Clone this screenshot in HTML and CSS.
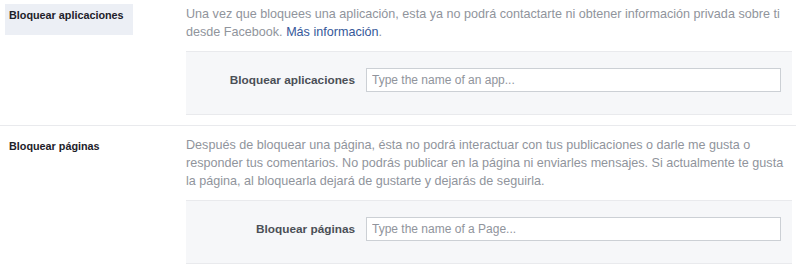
FILE: index.html
```html
<!DOCTYPE html>
<html lang="es">
<head>
<meta charset="utf-8">
<link rel="stylesheet" href="styles.css">
</head>
<body>
<div class="page">
  <div class="row row-first">
    <div class="side"><div class="side-label active">Bloquear aplicaciones</div></div>
    <div class="content">
      <p class="desc">Una vez que bloquees una aplicación, esta ya no podrá contactarte ni obtener información privada sobre ti desde Facebook. <a class="link" href="#">Más información</a>.</p>
      <div class="panel">
        <label class="panel-label">Bloquear aplicaciones</label>
        <input class="field" type="text" placeholder="Type the name of an app...">
      </div>
    </div>
  </div>
  <div class="row row-second">
    <div class="side"><div class="side-label">Bloquear páginas</div></div>
    <div class="content">
      <p class="desc">Después de bloquear una página, ésta no podrá interactuar con tus publicaciones o darle me gusta o responder tus comentarios. No podrás publicar en la página ni enviarles mensajes. Si actualmente te gusta la página, al bloquearla dejará de gustarte y dejarás de seguirla.</p>
      <div class="panel">
        <label class="panel-label">Bloquear páginas</label>
        <input class="field" type="text" placeholder="Type the name of a Page...">
      </div>
    </div>
  </div>
</div>
</body>
</html>
```

FILE: styles.css
```css
html, body {
  margin: 0;
  padding: 0;
  background: #ffffff;
}
body {
  font-family: "Liberation Sans", Arial, Helvetica, sans-serif;
  font-size: 12px;
  color: #1d2129;
}
.page {
  width: 796px;
}
.row {
  display: flex;
  border-bottom: 1px solid #e9eaed;
  padding-bottom: 10px;
}
.row-first {
  padding-top: 4px;
}
.row-second {
  padding-top: 9px;
  border-bottom: none;
  padding-bottom: 0;
}
.side {
  width: 181px;
  padding-left: 5px;
  flex: none;
}
.side-label {
  width: 120px;
  height: 25px;
  padding: 3px 4px;
  font-size: 10.8px;
  font-weight: bold;
  line-height: 16px;
  color: #1d2129;
}
.side-label.active {
  background: #eceff5;
}
.content {
  width: 606px;
  flex: none;
}
.desc {
  margin: 1px 0 0;
  line-height: 18px;
  color: #90949c;
  font-size: 12.6px;
}
.link {
  color: #365899;
  text-decoration: none;
}
.panel {
  margin-top: 10px;
  display: flex;
  align-items: center;
  gap: 11px;
  padding: 16px 11px 22px 0;
  background: #f6f7f9;
  border-top: 1px solid #e9eaed;
  border-bottom: 1px solid #e9eaed;
}
.panel-label {
  flex: 1;
  text-align: right;
  font-weight: bold;
  font-size: 11.8px;
  color: #4b4f56;
}
.field {
  width: 415px;
  height: 24px;
  box-sizing: border-box;
  border: 1px solid #ccd0d5;
  background: #ffffff;
  padding: 0 5px;
  margin: 0;
  font-family: "Liberation Sans", Arial, Helvetica, sans-serif;
  font-size: 12px;
  color: #1d2129;
  outline: none;
}
.field::placeholder {
  color: #90949c;
}
```
